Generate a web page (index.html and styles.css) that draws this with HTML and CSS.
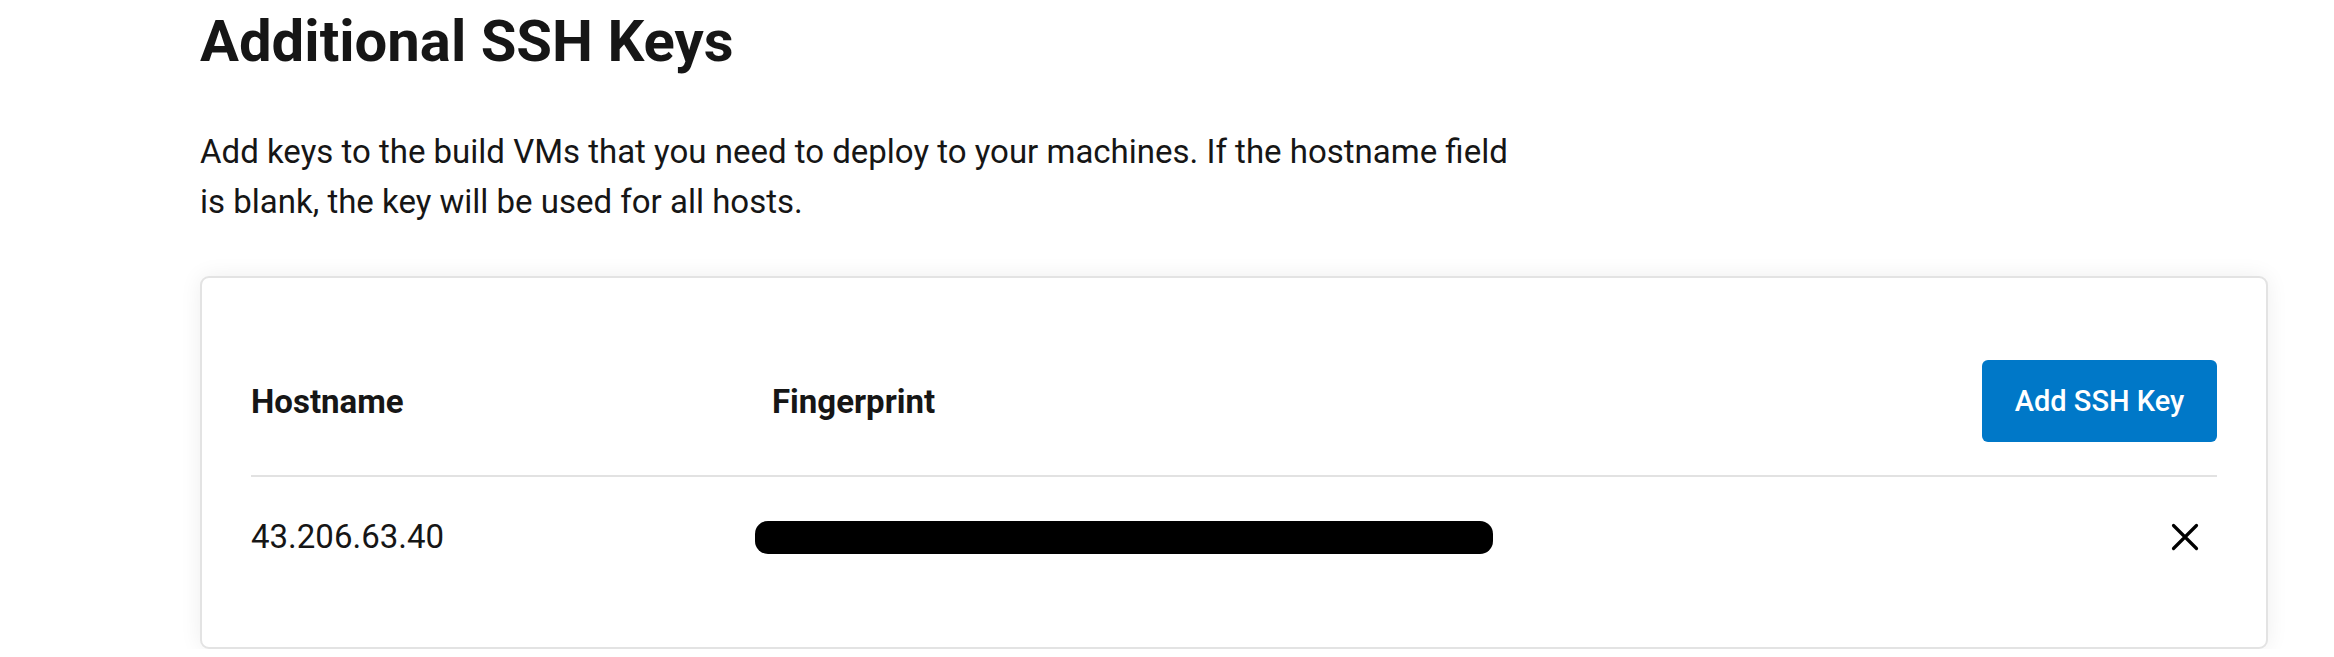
FILE: index.html
```html
<!DOCTYPE html>
<html lang="en">
<head>
<meta charset="utf-8">
<title>Additional SSH Keys</title>
<link rel="stylesheet" href="styles.css">
</head>
<body>
<main class="page">
  <h1 class="title">Additional SSH Keys</h1>
  <p class="intro">Add keys to the build VMs that you need to deploy to your machines. If the hostname field is blank, the key will be used for all hosts.</p>
  <section class="card">
    <div class="row row-head">
      <div class="cell cell-host">Hostname</div>
      <div class="cell cell-fp">Fingerprint</div>
      <div class="cell cell-action"><button class="btn-primary" type="button">Add SSH Key</button></div>
    </div>
    <div class="row row-data">
      <div class="cell cell-host">43.206.63.40</div>
      <div class="cell cell-fp"><span class="redacted" aria-label="redacted fingerprint"></span></div>
      <div class="cell cell-action">
        <button class="btn-remove" type="button" aria-label="Remove key">
          <svg width="28" height="28" viewBox="0 0 28 28" aria-hidden="true"><path d="M2.5 2.5 L25.5 25.5 M25.5 2.5 L2.5 25.5" stroke="#000" stroke-width="3.2" stroke-linecap="round" fill="none"/></svg>
        </button>
      </div>
    </div>
  </section>
</main>
</body>
</html>
```

FILE: styles.css
```css
html, body {
  margin: 0;
  padding: 0;
  background: #ffffff;
}

body {
  font-family: Roboto, "Liberation Sans", Arial, sans-serif;
  color: #161616;
}

.page {
  padding: 6px 66px 0 200px;
}

.title {
  margin: 0;
  font-size: 58px;
  font-weight: 700;
  line-height: 71px;
  color: #161616;
}

.intro {
  margin: 50px 0 0 0;
  max-width: 1325px;
  font-size: 33px;
  line-height: 49.5px;
  font-weight: 400;
}

.card {
  margin-top: 50px;
  border: 2px solid #e3e3e3;
  border-radius: 9px;
  background: #fff;
  box-shadow: 0 0 22px rgba(0, 0, 0, 0.07);
  padding: 49px 49px 50px 49px;
}

.row {
  display: grid;
  grid-template-columns: 521px 1fr auto;
  align-items: center;
}

.row-head {
  padding: 33px 0;
  border-bottom: 2px solid #e2e2e2;
  font-size: 33px;
  font-weight: 700;
}

.row-data {
  padding: 41px 0;
  font-size: 33px;
  line-height: 38px;
  font-weight: 400;
}

.cell-action {
  display: flex;
  justify-content: flex-end;
  align-items: center;
}

.btn-primary {
  height: 82px;
  width: 235px;
  border: 0;
  border-radius: 6px;
  background: #0078c8;
  color: #fff;
  font-family: Roboto, "Liberation Sans", Arial, sans-serif;
  font-size: 29px;
  font-weight: 500;
  padding: 0;
  cursor: pointer;
}

.btn-remove {
  display: flex;
  align-items: center;
  justify-content: center;
  border: 0;
  background: transparent;
  padding: 0;
  margin-right: 18px;
  cursor: pointer;
}

.redacted {
  display: block;
  width: 738px;
  height: 33px;
  margin-left: -17px;
  background: #000;
  border-radius: 13px;
}
```
